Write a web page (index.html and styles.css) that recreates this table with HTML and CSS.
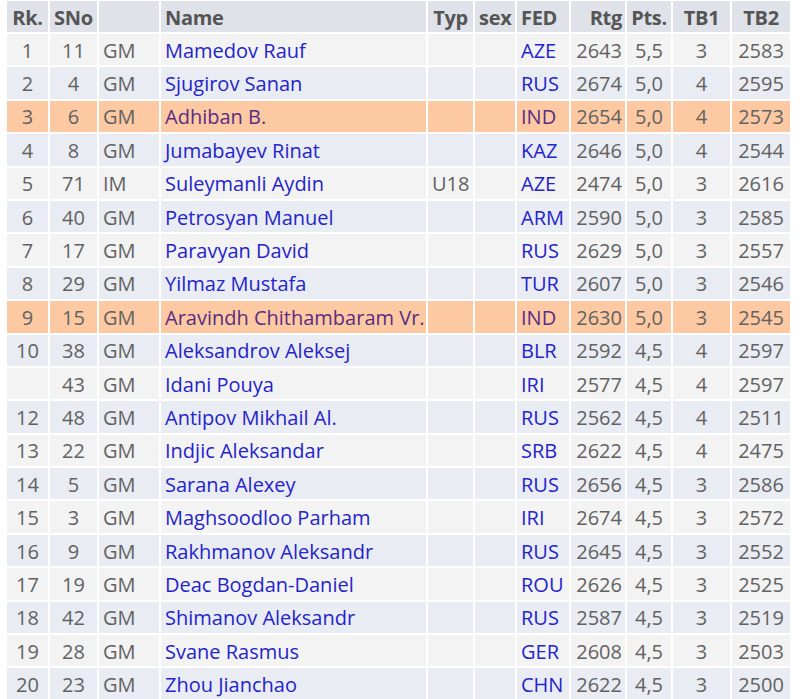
FILE: index.html
```html
<!DOCTYPE html>
<html>
<head>
<meta charset="utf-8">
<link rel="stylesheet" href="styles.css">
</head>
<body>
<table class="standings">
<colgroup>
<col class="c-rk"><col class="c-sno"><col class="c-tit"><col class="c-name"><col class="c-typ"><col class="c-sex"><col class="c-fed"><col class="c-rtg"><col class="c-pts"><col class="c-tb1"><col class="c-tb2">
</colgroup>
<thead>
<tr class="head">
<th class="ctr">Rk.</th><th class="ctr">SNo</th><th></th><th class="lft">Name</th><th class="ctr">Typ</th><th class="ctr">sex</th><th class="lft">FED</th><th class="rgt">Rtg</th><th class="ctr">Pts.</th><th class="ctr">TB1</th><th class="ctr">TB2</th>
</tr>
</thead>
<tbody>
<tr class="odd"><td class="ctr">1</td><td class="ctr">11</td><td class="lft">GM</td><td class="lft"><a>Mamedov Rauf</a></td><td class="ctr"></td><td></td><td class="lft"><a>AZE</a></td><td class="rgt">2643</td><td class="ctr">5,5</td><td class="ctr">3</td><td class="ctr">2583</td></tr>
<tr class="even"><td class="ctr">2</td><td class="ctr">4</td><td class="lft">GM</td><td class="lft"><a>Sjugirov Sanan</a></td><td class="ctr"></td><td></td><td class="lft"><a>RUS</a></td><td class="rgt">2674</td><td class="ctr">5,0</td><td class="ctr">4</td><td class="ctr">2595</td></tr>
<tr class="hl"><td class="ctr">3</td><td class="ctr">6</td><td class="lft">GM</td><td class="lft"><a>Adhiban B.</a></td><td class="ctr"></td><td></td><td class="lft"><a>IND</a></td><td class="rgt">2654</td><td class="ctr">5,0</td><td class="ctr">4</td><td class="ctr">2573</td></tr>
<tr class="even"><td class="ctr">4</td><td class="ctr">8</td><td class="lft">GM</td><td class="lft"><a>Jumabayev Rinat</a></td><td class="ctr"></td><td></td><td class="lft"><a>KAZ</a></td><td class="rgt">2646</td><td class="ctr">5,0</td><td class="ctr">4</td><td class="ctr">2544</td></tr>
<tr class="odd"><td class="ctr">5</td><td class="ctr">71</td><td class="lft">IM</td><td class="lft"><a>Suleymanli Aydin</a></td><td class="ctr">U18</td><td></td><td class="lft"><a>AZE</a></td><td class="rgt">2474</td><td class="ctr">5,0</td><td class="ctr">3</td><td class="ctr">2616</td></tr>
<tr class="even"><td class="ctr">6</td><td class="ctr">40</td><td class="lft">GM</td><td class="lft"><a class="vis">Petrosyan Manuel</a></td><td class="ctr"></td><td></td><td class="lft"><a>ARM</a></td><td class="rgt">2590</td><td class="ctr">5,0</td><td class="ctr">3</td><td class="ctr">2585</td></tr>
<tr class="odd"><td class="ctr">7</td><td class="ctr">17</td><td class="lft">GM</td><td class="lft"><a>Paravyan David</a></td><td class="ctr"></td><td></td><td class="lft"><a>RUS</a></td><td class="rgt">2629</td><td class="ctr">5,0</td><td class="ctr">3</td><td class="ctr">2557</td></tr>
<tr class="even"><td class="ctr">8</td><td class="ctr">29</td><td class="lft">GM</td><td class="lft"><a>Yilmaz Mustafa</a></td><td class="ctr"></td><td></td><td class="lft"><a>TUR</a></td><td class="rgt">2607</td><td class="ctr">5,0</td><td class="ctr">3</td><td class="ctr">2546</td></tr>
<tr class="hl"><td class="ctr">9</td><td class="ctr">15</td><td class="lft">GM</td><td class="lft"><a>Aravindh Chithambaram Vr.</a></td><td class="ctr"></td><td></td><td class="lft"><a>IND</a></td><td class="rgt">2630</td><td class="ctr">5,0</td><td class="ctr">3</td><td class="ctr">2545</td></tr>
<tr class="even"><td class="ctr">10</td><td class="ctr">38</td><td class="lft">GM</td><td class="lft"><a>Aleksandrov Aleksej</a></td><td class="ctr"></td><td></td><td class="lft"><a>BLR</a></td><td class="rgt">2592</td><td class="ctr">4,5</td><td class="ctr">4</td><td class="ctr">2597</td></tr>
<tr class="odd"><td class="ctr"></td><td class="ctr">43</td><td class="lft">GM</td><td class="lft"><a>Idani Pouya</a></td><td class="ctr"></td><td></td><td class="lft"><a>IRI</a></td><td class="rgt">2577</td><td class="ctr">4,5</td><td class="ctr">4</td><td class="ctr">2597</td></tr>
<tr class="even"><td class="ctr">12</td><td class="ctr">48</td><td class="lft">GM</td><td class="lft"><a>Antipov Mikhail Al.</a></td><td class="ctr"></td><td></td><td class="lft"><a>RUS</a></td><td class="rgt">2562</td><td class="ctr">4,5</td><td class="ctr">4</td><td class="ctr">2511</td></tr>
<tr class="odd"><td class="ctr">13</td><td class="ctr">22</td><td class="lft">GM</td><td class="lft"><a>Indjic Aleksandar</a></td><td class="ctr"></td><td></td><td class="lft"><a>SRB</a></td><td class="rgt">2622</td><td class="ctr">4,5</td><td class="ctr">4</td><td class="ctr">2475</td></tr>
<tr class="even"><td class="ctr">14</td><td class="ctr">5</td><td class="lft">GM</td><td class="lft"><a>Sarana Alexey</a></td><td class="ctr"></td><td></td><td class="lft"><a>RUS</a></td><td class="rgt">2656</td><td class="ctr">4,5</td><td class="ctr">3</td><td class="ctr">2586</td></tr>
<tr class="odd"><td class="ctr">15</td><td class="ctr">3</td><td class="lft">GM</td><td class="lft"><a>Maghsoodloo Parham</a></td><td class="ctr"></td><td></td><td class="lft"><a>IRI</a></td><td class="rgt">2674</td><td class="ctr">4,5</td><td class="ctr">3</td><td class="ctr">2572</td></tr>
<tr class="even"><td class="ctr">16</td><td class="ctr">9</td><td class="lft">GM</td><td class="lft"><a>Rakhmanov Aleksandr</a></td><td class="ctr"></td><td></td><td class="lft"><a>RUS</a></td><td class="rgt">2645</td><td class="ctr">4,5</td><td class="ctr">3</td><td class="ctr">2552</td></tr>
<tr class="odd"><td class="ctr">17</td><td class="ctr">19</td><td class="lft">GM</td><td class="lft"><a>Deac Bogdan-Daniel</a></td><td class="ctr"></td><td></td><td class="lft"><a>ROU</a></td><td class="rgt">2626</td><td class="ctr">4,5</td><td class="ctr">3</td><td class="ctr">2525</td></tr>
<tr class="even"><td class="ctr">18</td><td class="ctr">42</td><td class="lft">GM</td><td class="lft"><a>Shimanov Aleksandr</a></td><td class="ctr"></td><td></td><td class="lft"><a>RUS</a></td><td class="rgt">2587</td><td class="ctr">4,5</td><td class="ctr">3</td><td class="ctr">2519</td></tr>
<tr class="odd"><td class="ctr">19</td><td class="ctr">28</td><td class="lft">GM</td><td class="lft"><a>Svane Rasmus</a></td><td class="ctr"></td><td></td><td class="lft"><a>GER</a></td><td class="rgt">2608</td><td class="ctr">4,5</td><td class="ctr">3</td><td class="ctr">2503</td></tr>
<tr class="even"><td class="ctr">20</td><td class="ctr">23</td><td class="lft">GM</td><td class="lft"><a>Zhou Jianchao</a></td><td class="ctr"></td><td></td><td class="lft"><a>CHN</a></td><td class="rgt">2622</td><td class="ctr">4,5</td><td class="ctr">3</td><td class="ctr">2500</td></tr>
</tbody>
</table>
</body>
</html>
```
FILE: styles.css
```css
html, body {
  margin: 0;
  padding: 0;
  background: #ffffff;
}
body {
  font-family: "Open Sans", "Noto Sans", sans-serif;
  font-size: 20px;
  color: #626262;
  overflow: hidden;
}
.standings {
  table-layout: fixed;
  width: 787px;
  border-collapse: separate;
  border-spacing: 2px;
  margin: -1px 0 0 5px;
}
.c-rk { width: 41px; }
.c-sno { width: 47px; }
.c-tit { width: 60px; }
.c-name { width: 265px; }
.c-typ { width: 45px; }
.c-sex { width: 40px; }
.c-fed { width: 52px; }
.c-rtg { width: 54px; }
.c-pts { width: 44px; }
.c-tb1 { width: 57px; }
.c-tb2 { width: 58px; }
th, td {
  padding: 2px 4px 0;
  white-space: nowrap;
  overflow: hidden;
  line-height: 22px;
}
.head th {
  height: 28px;
  padding-top: 3px;
  background: #dfe3e9;
  color: #555555;
  font-weight: 700;
  letter-spacing: -0.3px;
}
tbody td {
  height: 29.4px;
}
.lft { text-align: left; }
.ctr { text-align: center; }
.rgt { text-align: right; padding-right: 3px; }
.odd td { background: #f3f3f3; }
.even td { background: #e9ecf2; }
.hl td { background: #fcc9a3; }
a {
  color: #2424cc;
  text-decoration: none;
}
.hl a { color: #5a2d82; }
```
